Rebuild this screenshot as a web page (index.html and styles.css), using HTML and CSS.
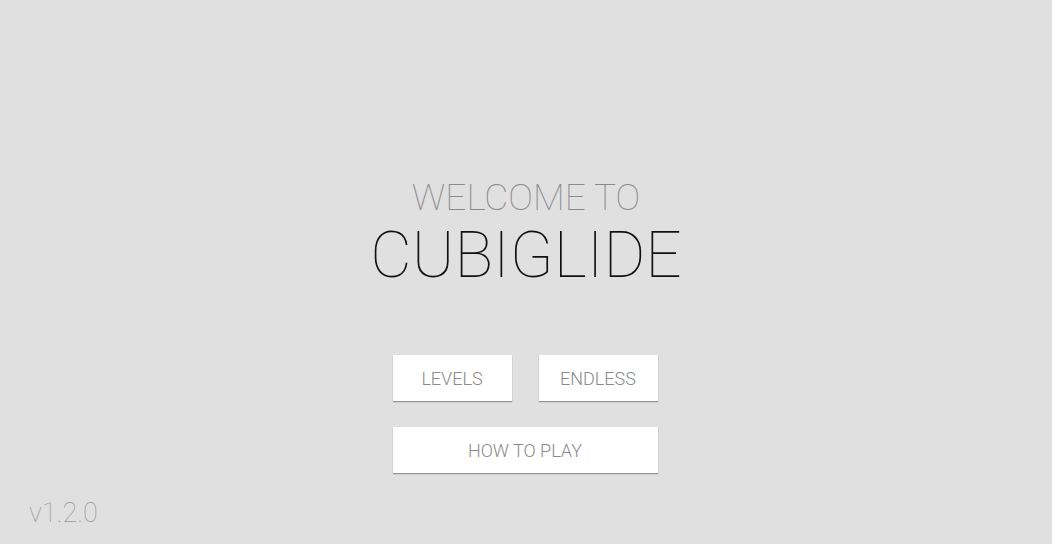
FILE: index.html
```html
<!DOCTYPE html>
<html>
<head>
  <title>Cubiglide</title>
  <link rel="stylesheet" href="styles.css">
</head>
<body>
  <div class="container">
    <div class="menu">
      <div class="welcome">WELCOME TO</div>
      <div class="game-title">CUBIGLIDE</div>

      <div class="buttons">
        <div class="button-row">
          <button class="menu-button">LEVELS</button>
          <button class="menu-button">ENDLESS</button>
        </div>
        <button class="menu-button wide">HOW TO PLAY</button>
      </div>
    </div>

    <div class="version">v1.2.0</div>
  </div>
</body>
</html>
```

FILE: styles.css
```css
body {
  margin: 0;
  padding: 0;
  background: #e0e0e0;
  font-family: Roboto, 'Liberation Sans', sans-serif;
}

.container {
  display: flex;
  flex-direction: column;
  height: 100vh;
}

.menu {
  flex: 1;
  display: flex;
  flex-direction: column;
  align-items: center;
  padding-top: 178px;
}

.welcome {
  font-size: 37px;
  line-height: 40px;
  font-weight: 100;
  color: #8a8a8a;
}

.game-title {
  font-size: 64px;
  line-height: 67px;
  font-weight: 100;
  color: #111;
  margin-top: 4px;
}

.buttons {
  display: flex;
  flex-direction: column;
  gap: 26px;
  margin-top: 66px;
  margin-right: 2px;
  width: 265px;
}

.button-row {
  display: flex;
  justify-content: space-between;
}

.menu-button {
  background: #fff;
  border: none;
  width: 119px;
  height: 46px;
  padding: 0;
  font-family: Roboto, 'Liberation Sans', sans-serif;
  font-size: 18px;
  font-weight: 300;
  color: #8a8a8a;
  box-shadow: 0 1px 1px rgba(0, 0, 0, 0.35);
  cursor: pointer;
}

.menu-button.wide {
  width: 100%;
}

.version {
  padding: 0 0 16px 29px;
  font-size: 27px;
  line-height: 30px;
  font-weight: 100;
  color: #999;
}
```
